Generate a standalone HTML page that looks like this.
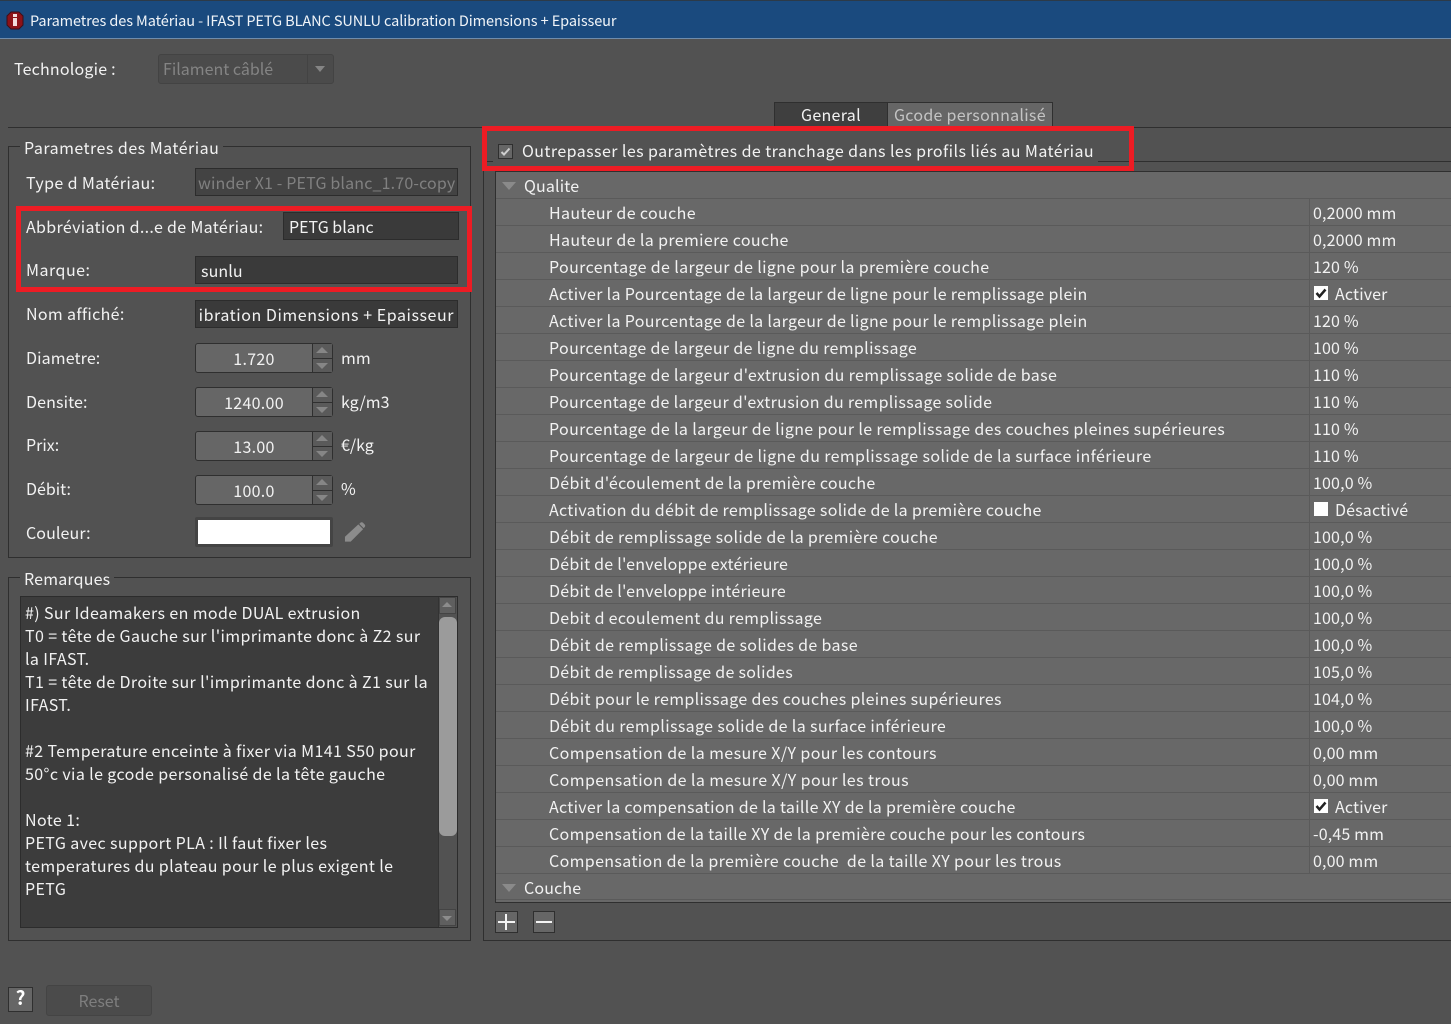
<!DOCTYPE html>
<html><head><meta charset="utf-8"><style>
html,body{margin:0;padding:0;background:#525252}
#r{position:relative;width:1451px;height:1024px;overflow:hidden;background:#525252;font-family:"Noto Sans CJK SC","Liberation Sans",sans-serif;font-size:16px;color:#f2f2f2}
#r div{position:absolute;box-sizing:border-box}
.t{white-space:nowrap;line-height:24px;height:24px;margin-top:-1px;letter-spacing:.1px}
.l{letter-spacing:.38px}
.i{background:#3a3a3a;border:1px solid #2c2c2c}
.b{border:1px solid #2f2f2f}
.row{left:496px;width:955px;height:27px;border-bottom:1px solid #5a5a5a;background:#686868}
.n{left:53px;top:1px;white-space:nowrap;line-height:24px;letter-spacing:.36px}
.v{left:817px;top:1px;white-space:nowrap;line-height:24px;letter-spacing:.15px}
.d{left:813px;top:0;width:1px;height:26px;background:#5a5a5a}
.cb{left:818px;top:6px;width:14px;height:14px;background:#fff}
.sp{left:195px;width:138px;height:30px;background:#666;border:1px solid #2f2f2f;border-radius:3px;text-align:center;line-height:28px;padding-right:20px;letter-spacing:.3px}
.sb{right:0;top:0;width:20px;height:28px;border-left:1px solid #2f2f2f;background:#5a5a5a}
.up{left:3px;top:3px;width:0;height:0;border:6px solid transparent;border-top:0;border-bottom:6px solid #868686}
.dn{left:3px;top:19px;width:0;height:0;border:6px solid transparent;border-bottom:0;border-top:6px solid #868686}
.ln{left:0;top:14px;width:19px;height:1px;background:#2f2f2f}
.tri{left:6px;top:10px;width:0;height:0;border:7px solid transparent;border-bottom:0;border-top:8px solid #8a8a8a}
</style></head><body><div id="r">
<div style="left:0;top:0;width:1451px;height:39px;background:#1a4a7e;border-top:1px solid #2c3a48;border-bottom:1px solid #6f8cab"></div>
<svg style="position:absolute;left:6px;top:11px" width="18" height="19" viewBox="0 0 18 19"><path d="M5 1h8l4 4v9l-4 4H5l-4-4V5z" fill="#8d1218" stroke="#3c0f1a"/><rect x="7" y="7" width="4" height="8" fill="#f3dcdc"/><rect x="7" y="3" width="4" height="3" fill="#f3dcdc"/></svg>
<div class="t" style="left:30px;top:9px;color:#f0f4f8;font-size:14.5px;letter-spacing:-.09px;margin-top:0">Parametres des Matériau - IFAST PETG BLANC SUNLU calibration Dimensions + Epaisseur</div>

<div class="t" style="left:14px;top:57px;letter-spacing:.2px">Technologie :</div>
<div style="left:158px;top:54px;width:176px;height:30px;background:#4b4b4b;border:1px solid #434343;border-radius:3px"></div>
<div style="left:307px;top:55px;width:1px;height:28px;background:#434343"></div>
<div style="left:315px;top:66px;width:0;height:0;border:5px solid transparent;border-bottom:0;border-top:6px solid #858585"></div>
<div class="t" style="left:163px;top:57px;color:#848484;letter-spacing:0">Filament câblé</div>

<div style="left:8px;top:127px;width:1443px;height:1px;background:#2f2f2f"></div>
<div style="left:774px;top:102px;width:114px;height:26px;background:#3f3f3f;border:1px solid #2f2f2f;border-bottom:0"></div>
<div style="left:888px;top:102px;width:165px;height:26px;background:#666;border:1px solid #2f2f2f;border-bottom:0;border-left:0"></div>
<div class="t" style="left:801px;top:103px;letter-spacing:.3px">General</div>
<div class="t" style="left:894px;top:103px;color:#c4c4c4;letter-spacing:.28px">Gcode personnalisé</div>

<!-- left group -->
<div class="b" style="left:8px;top:146px;width:463px;height:412px"></div>
<div class="t" style="left:20px;top:136px;background:#525252;padding:0 4px;letter-spacing:.48px">Parametres des Matériau</div>
<div class="t l" style="left:26px;top:171px">Type d Matériau:</div>
<div class="i" style="left:195px;top:168px;width:263px;height:28px;background:#434343"></div>
<div class="t" style="left:198px;top:171px;color:#808080;letter-spacing:.16px">winder X1 - PETG blanc_1.70-copy</div>
<div class="t" style="left:26px;top:215px;letter-spacing:.32px">Abbréviation d...e de Matériau:</div>
<div class="i" style="left:283px;top:212px;width:176px;height:28px"></div>
<div class="t" style="left:289px;top:215px;letter-spacing:0">PETG blanc</div>
<div class="t" style="left:26px;top:258px;letter-spacing:.5px">Marque:</div>
<div class="i" style="left:195px;top:256px;width:263px;height:28px"></div>
<div class="t" style="left:201px;top:259px">sunlu</div>
<div class="t" style="left:26px;top:302px;letter-spacing:.33px">Nom affiché:</div>
<div class="i" style="left:195px;top:300px;width:263px;height:28px"></div>
<div style="left:199px;top:300px;width:258px;height:28px;overflow:hidden"><div class="t" style="right:3px;top:3px;letter-spacing:.55px">calibration Dimensions + Epaisseur</div></div>

<div class="t" style="left:26px;top:346px;letter-spacing:.12px">Diametre:</div>
<div class="sp" style="top:343px">1.720<div class="sb"><div class="up"></div><div class="dn"></div><div class="ln"></div></div></div>
<div class="t" style="left:341px;top:346px;letter-spacing:0">mm</div>
<div class="t" style="left:26px;top:390px;letter-spacing:.12px">Densite:</div>
<div class="sp" style="top:387px">1240.00<div class="sb"><div class="up"></div><div class="dn"></div><div class="ln"></div></div></div>
<div class="t" style="left:341px;top:390px;letter-spacing:0">kg/m3</div>
<div class="t" style="left:26px;top:433px;letter-spacing:0">Prix:</div>
<div class="sp" style="top:431px">13.00<div class="sb"><div class="up"></div><div class="dn"></div><div class="ln"></div></div></div>
<div class="t" style="left:341px;top:433px;letter-spacing:0">€/kg</div>
<div class="t" style="left:26px;top:477px;letter-spacing:0">Débit:</div>
<div class="sp" style="top:475px">100.0<div class="sb"><div class="up"></div><div class="dn"></div><div class="ln"></div></div></div>
<div class="t" style="left:341px;top:477px;letter-spacing:0">%</div>
<div class="t" style="left:26px;top:521px">Couleur:</div>
<div style="left:195px;top:517px;width:138px;height:30px;background:#fff;border:3px solid #444;border-radius:2px"></div>
<svg style="position:absolute;left:344px;top:521px" width="22" height="22" viewBox="0 0 23 22"><path d="M1 21v-5L15 3l5 5L7 21z M17 1.500a2 2 0 0 1 3 0l1.500 1.500a2 2 0 0 1 0 3L20.500 7l-4.500-4.500z" fill="#8c8c8c"/></svg>

<!-- remarks -->
<div class="b" style="left:8px;top:577px;width:463px;height:364px"></div>
<div class="t" style="left:20px;top:567px;background:#525252;padding:0 4px;letter-spacing:.18px">Remarques</div>
<div class="i" style="left:20px;top:596px;width:438px;height:332px;background:#3c3c3c"></div>
<div style="left:25px;top:601px;width:410px;line-height:23px;white-space:nowrap;letter-spacing:.38px">#) Sur Ideamakers en mode DUAL extrusion<br>T0 = tête de Gauche sur l'imprimante donc à Z2 sur<br>la IFAST.<br>T1 = tête de Droite sur l'imprimante donc à Z1 sur la<br>IFAST.<br><br>#2 Temperature enceinte à fixer via M141 S50 pour<br>50°c via le gcode personalisé de la tête gauche<br><br>Note 1:<br>PETG avec support PLA : Il faut fixer les<br>temperatures du plateau pour le plus exigent le<br>PETG</div>
<div style="left:438px;top:597px;width:19px;height:330px;background:#525252;border-left:1px solid #333"></div>
<div style="left:439px;top:597px;width:17px;height:17px;background:#5f5f5f;border:1px solid #444"></div>
<div style="left:442px;top:602px;width:0;height:0;border:5px solid transparent;border-top:0;border-bottom:5px solid #8c8c8c"></div>
<div style="left:439px;top:617px;width:18px;height:219px;background:#9b9b9b;border-radius:6px"></div>
<div style="left:439px;top:909px;width:17px;height:17px;background:#5f5f5f;border:1px solid #444"></div>
<div style="left:442px;top:916px;width:0;height:0;border:5px solid transparent;border-bottom:0;border-top:5px solid #8c8c8c"></div>

<!-- right -->
<div class="b" style="left:483px;top:161px;width:969px;height:780px"></div>
<div style="left:495px;top:171px;width:956px;height:732px;background:#686868;border:1px solid #2f2f2f;border-right:0"></div>
<div class="t" style="left:493px;top:140px;width:605px;height:24px;background:#525252"></div>
<div style="left:498px;top:144px;width:15px;height:15px;background:#666;border:1px solid #2f2f2f"></div>
<svg style="position:absolute;left:498px;top:144px" width="15" height="15" viewBox="0 0 15 15"><path d="M3.500 8l2.500 2.500 5.500-6" fill="none" stroke="#cfcfcf" stroke-width="2"/></svg>
<div class="t" style="left:522px;top:139px;letter-spacing:.42px">Outrepasser les paramètres de tranchage dans les profils liés au Matériau</div>

<div class="row" style="top:172px"><div class="tri"></div><div class="n" style="left:28px;letter-spacing:.15px">Qualite</div></div>
<div class="row" style="top:199px"><div class="n">Hauteur de couche</div><div class="d"></div><div class="v">0,2000 mm</div></div>
<div class="row" style="top:226px"><div class="n">Hauteur de la premiere couche</div><div class="d"></div><div class="v">0,2000 mm</div></div>
<div class="row" style="top:253px"><div class="n">Pourcentage de largeur de ligne pour la première couche</div><div class="d"></div><div class="v">120 %</div></div>
<div class="row" style="top:280px"><div class="n" style="letter-spacing:.32px">Activer la Pourcentage de la largeur de ligne pour le remplissage plein</div><div class="d"></div><div class="cb"></div><svg style="position:absolute;left:818px;top:6px" width="14" height="14"><path d="M2.500 7l3 3.500 6-7" fill="none" stroke="#222" stroke-width="2.500"/></svg><div class="v" style="left:839px">Activer</div></div>
<div class="row" style="top:307px"><div class="n" style="letter-spacing:.32px">Activer la Pourcentage de la largeur de ligne pour le remplissage plein</div><div class="d"></div><div class="v">120 %</div></div>
<div class="row" style="top:334px"><div class="n" style="letter-spacing:.34px">Pourcentage de largeur de ligne du remplissage</div><div class="d"></div><div class="v">100 %</div></div>
<div class="row" style="top:361px"><div class="n" style="letter-spacing:.34px">Pourcentage de largeur d'extrusion du remplissage solide de base</div><div class="d"></div><div class="v">110 %</div></div>
<div class="row" style="top:388px"><div class="n" style="letter-spacing:.32px">Pourcentage de largeur d'extrusion du remplissage solide</div><div class="d"></div><div class="v">110 %</div></div>
<div class="row" style="top:415px"><div class="n" style="letter-spacing:.35px">Pourcentage de la largeur de ligne pour le remplissage des couches pleines supérieures</div><div class="d"></div><div class="v">110 %</div></div>
<div class="row" style="top:442px"><div class="n" style="letter-spacing:.37px">Pourcentage de largeur de ligne du remplissage solide de la surface inférieure</div><div class="d"></div><div class="v">110 %</div></div>
<div class="row" style="top:469px"><div class="n" style="letter-spacing:.29px">Débit d'écoulement de la première couche</div><div class="d"></div><div class="v">100,0 %</div></div>
<div class="row" style="top:496px"><div class="n" style="letter-spacing:.30px">Activation du débit de remplissage solide de la première couche</div><div class="d"></div><div class="cb"></div><div class="v" style="left:839px">Désactivé</div></div>
<div class="row" style="top:523px"><div class="n" style="letter-spacing:.32px">Débit de remplissage solide de la première couche</div><div class="d"></div><div class="v">100,0 %</div></div>
<div class="row" style="top:550px"><div class="n" style="letter-spacing:.23px">Débit de l'enveloppe extérieure</div><div class="d"></div><div class="v">100,0 %</div></div>
<div class="row" style="top:577px"><div class="n" style="letter-spacing:.23px">Débit de l'enveloppe intérieure</div><div class="d"></div><div class="v">100,0 %</div></div>
<div class="row" style="top:604px"><div class="n" style="letter-spacing:.30px">Debit d ecoulement du remplissage</div><div class="d"></div><div class="v">100,0 %</div></div>
<div class="row" style="top:631px"><div class="n" style="letter-spacing:.34px">Débit de remplissage de solides de base</div><div class="d"></div><div class="v">100,0 %</div></div>
<div class="row" style="top:658px"><div class="n" style="letter-spacing:.30px">Débit de remplissage de solides</div><div class="d"></div><div class="v">105,0 %</div></div>
<div class="row" style="top:685px"><div class="n" style="letter-spacing:.34px">Débit pour le remplissage des couches pleines supérieures</div><div class="d"></div><div class="v">104,0 %</div></div>
<div class="row" style="top:712px"><div class="n">Débit du remplissage solide de la surface inférieure</div><div class="d"></div><div class="v">100,0 %</div></div>
<div class="row" style="top:739px"><div class="n" style="letter-spacing:.40px">Compensation de la mesure X/Y pour les contours</div><div class="d"></div><div class="v">0,00 mm</div></div>
<div class="row" style="top:766px"><div class="n" style="letter-spacing:.41px">Compensation de la mesure X/Y pour les trous</div><div class="d"></div><div class="v">0,00 mm</div></div>
<div class="row" style="top:793px"><div class="n" style="letter-spacing:.29px">Activer la compensation de la taille XY de la première couche</div><div class="d"></div><div class="cb"></div><svg style="position:absolute;left:818px;top:6px" width="14" height="14"><path d="M2.500 7l3 3.500 6-7" fill="none" stroke="#222" stroke-width="2.500"/></svg><div class="v" style="left:839px">Activer</div></div>
<div class="row" style="top:820px"><div class="n" style="letter-spacing:.35px">Compensation de la taille XY de la première couche pour les contours</div><div class="d"></div><div class="v">-0,45 mm</div></div>
<div class="row" style="top:847px"><div class="n">Compensation de la première couche&nbsp; de la taille XY pour les trous</div><div class="d"></div><div class="v">0,00 mm</div></div>
<div class="row" style="top:874px;height:26px"><div class="tri" style="left:6px"></div><div class="n" style="left:28px;letter-spacing:.15px">Couche</div></div>

<div style="left:495px;top:911px;width:23px;height:22px;background:#666;border:1px solid #2f2f2f"></div>
<div style="left:498px;top:921px;width:17px;height:2px;background:#f4f4f4"></div>
<div style="left:505px;top:914px;width:2px;height:16px;background:#f4f4f4"></div>
<div style="left:533px;top:911px;width:22px;height:22px;background:#666;border:1px solid #2f2f2f"></div>
<div style="left:536px;top:921px;width:16px;height:2px;background:#f4f4f4"></div>

<div style="left:8px;top:987px;width:25px;height:25px;background:#666;border:1px solid #2f2f2f"></div>
<div class="t" style="left:8px;top:987px;width:25px;text-align:center;font-weight:700;font-size:19px;color:#fff">?</div>
<div style="left:46px;top:985px;width:106px;height:31px;background:#4b4b4b;border:1px solid #444;border-radius:3px"></div>
<div class="t" style="left:46px;top:989px;width:106px;text-align:center;color:#7e7e7e;letter-spacing:0">Reset</div>

<!-- red boxes -->
<div style="left:16px;top:206px;width:456px;height:86px;border:5px solid #ed1c24"></div>
<div style="left:482px;top:126px;width:652px;height:45px;border:5px solid #ed1c24"></div>
</div></body></html>
